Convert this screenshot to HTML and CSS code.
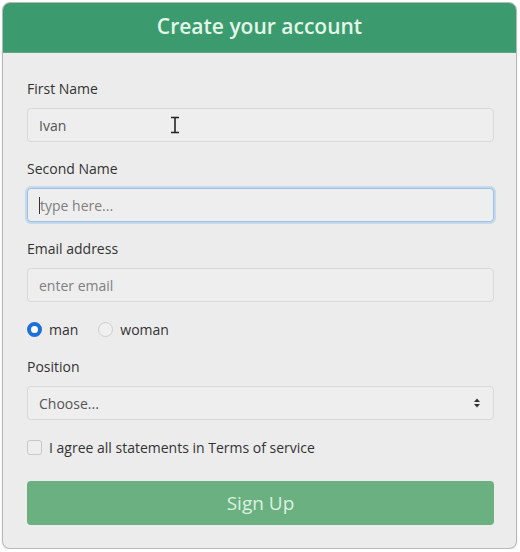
FILE: index.html
```html
<!DOCTYPE html>
<html>
<head>
<meta charset="utf-8">
<link rel="stylesheet" href="styles.css">
</head>
<body>
<div class="card">
  <div class="card-header">Create your account</div>
  <form class="card-body">
    <div class="group">
      <label class="label">First Name</label>
      <div class="field">
        <span class="value">Ivan</span>
        <svg class="ibeam" width="10" height="18" viewBox="0 0 10 18"><path d="M1 1.5h8M1 16.5h8M5 1.5v15" stroke="#222" stroke-width="1.6" fill="none"/></svg>
      </div>
    </div>
    <div class="group">
      <label class="label">Second Name</label>
      <div class="field focus"><span class="caret"></span><span class="placeholder">type here...</span></div>
    </div>
    <div class="group">
      <label class="label">Email address</label>
      <div class="field"><span class="placeholder">enter email</span></div>
    </div>
    <div class="group radios">
      <span class="opt"><span class="radio checked"></span>man</span>
      <span class="opt"><span class="radio"></span>woman</span>
    </div>
    <div class="group">
      <label class="label">Position</label>
      <div class="field select"><span class="value">Choose...</span>
        <svg class="arrows" width="8" height="12" viewBox="0 0 8 12"><path d="M4 1.5L7 5H1z M4 10.5L7 7H1z" fill="#333"/></svg>
      </div>
    </div>
    <div class="group check">
      <span class="checkbox"></span>I agree all statements in Terms of service
    </div>
    <div class="btn">Sign Up</div>
  </form>
</div>
</body>
</html>
```
FILE: styles.css
```css
html, body { margin: 0; padding: 0; background: #ffffff; }
body { font-family: "Open Sans", "Noto Sans", sans-serif; color: #333; }
.card {
  margin: 2px 0 0 2px;
  width: 515px;
  height: 547px;
  box-sizing: border-box;
  border: 1px solid #b9b9b9;
  border-radius: 8px;
  background: #ececec;
  overflow: hidden;
  box-shadow: 0 1px 2px rgba(0,0,0,0.15);
}
.card-header {
  background: #3b9b6f;
  color: #e3f6e8;
  font-size: 21px;
  font-weight: 600;
  display: flex;
  align-items: center;
  justify-content: center;
  border-bottom: 1px solid #5aa985;
  box-sizing: border-box;
  height: 50px;
  padding-bottom: 4px;
}
.card-body {
  margin: 0;
  padding: 25px 22px 0 24px;
  display: flex;
  flex-direction: column;
}
.group { display: flex; flex-direction: column; margin-bottom: 16px; }
.label { font-size: 14px; line-height: 22px; margin-bottom: 8px; color: #333; }
.field {
  position: relative;
  height: 34px;
  box-sizing: border-box;
  border: 1px solid #d9d9d9;
  border-radius: 4px;
  background: #eeeeee;
  display: flex;
  align-items: center;
  padding: 0 11px;
  font-size: 14px;
}
.field.focus {
  border-color: #9ec2e6;
  box-shadow: 0 0 0 2px #c4d8ee;
}
.value { color: #555; }
.placeholder { color: #808080; }
.caret { width: 1px; height: 17px; background: #333; }
.ibeam { position: absolute; left: 142px; top: 7px; }
.select { justify-content: space-between; }
.arrows { margin-right: 1px; }
.radios { flex-direction: row; align-items: center; height: 22px; font-size: 14px; gap: 20px; }
.opt { display: flex; align-items: center; gap: 7px; }
.radio {
  width: 15px; height: 15px; box-sizing: border-box;
  border-radius: 50%;
  border: 1px solid #cfcfcf;
  background: #f0f0f0;
}
.radio.checked { border: 4px solid #1e6fd9; background: #ffffff; }
.check { flex-direction: row; align-items: center; height: 22px; font-size: 14px; gap: 7px; margin-bottom: 23px; }
.checkbox {
  width: 15px; height: 15px; box-sizing: border-box;
  border: 1px solid #c8c8c8; border-radius: 3px; background: #eeeeee;
}
.btn {
  height: 44px;
  border-radius: 4px;
  background: #6bb081;
  color: #dcf2e0;
  font-size: 19px;
  display: flex;
  align-items: center;
  justify-content: center;
}
```
